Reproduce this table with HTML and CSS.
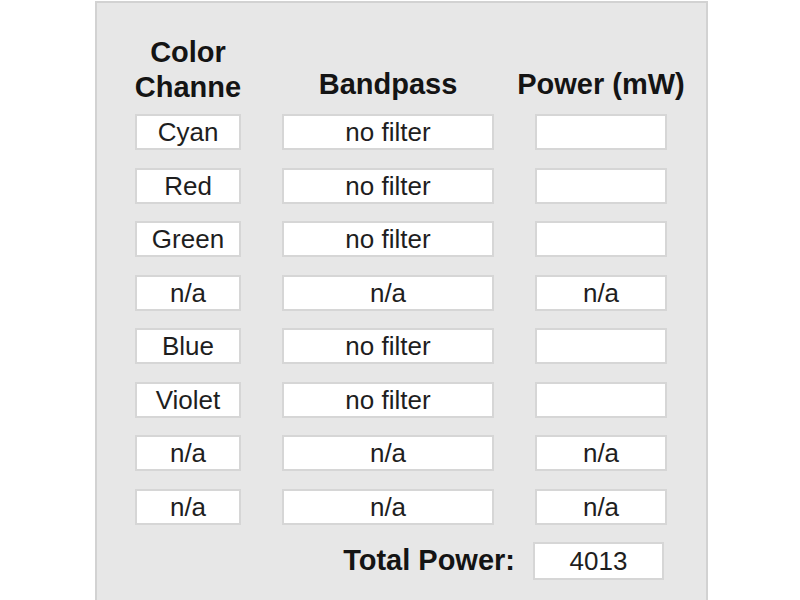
FILE: index.html
```html
<!DOCTYPE html>
<html>
<head>
<meta charset="utf-8">
<link rel="stylesheet" href="styles.css">
</head>
<body>
<div class="panel">
  <div class="head">
    <div class="hcell h1">Color<br>Channe</div>
    <div class="hcell">Bandpass</div>
    <div class="hcell">Power (mW)</div>
  </div>
  <div class="rows">
    <div class="box">Cyan</div><div class="box">no filter</div><div class="box"></div>
    <div class="box">Red</div><div class="box">no filter</div><div class="box"></div>
    <div class="box">Green</div><div class="box">no filter</div><div class="box"></div>
    <div class="box">n/a</div><div class="box">n/a</div><div class="box">n/a</div>
    <div class="box">Blue</div><div class="box">no filter</div><div class="box"></div>
    <div class="box">Violet</div><div class="box">no filter</div><div class="box"></div>
    <div class="box">n/a</div><div class="box">n/a</div><div class="box">n/a</div>
    <div class="box">n/a</div><div class="box">n/a</div><div class="box">n/a</div>
  </div>
  <div class="total">
    <div class="tlabel">Total Power:</div>
    <div class="box tbox">4013</div>
  </div>
</div>
</body>
</html>
```

FILE: styles.css
```css
html, body {
  margin: 0;
  padding: 0;
  background: #ffffff;
  font-family: "Liberation Sans", Arial, sans-serif;
  color: #1a1a1a;
  overflow: hidden;
}

.panel {
  box-sizing: border-box;
  margin-left: 95px;
  margin-top: 1px;
  width: 613px;
  height: 599px;
  background: #e7e7e7;
  border: 2px solid #d2d2d2;
  border-bottom: none;
  padding: 32px 39px 0 38px;
}

.head {
  display: grid;
  grid-template-columns: 106px 212px 132px;
  column-gap: 41px;
  align-items: end;
  margin-bottom: 9px;
}

.hcell {
  display: flex;
  justify-content: center;
  text-align: center;
  white-space: nowrap;
  font-weight: bold;
  font-size: 29px;
  line-height: 35px;
  color: #141414;
  padding-bottom: 3px;
}

.hcell.h1 {
  padding-bottom: 0;
}

.rows {
  display: grid;
  grid-template-columns: 106px 212px 132px;
  column-gap: 41px;
  row-gap: 17.5px;
}

.box {
  box-sizing: border-box;
  height: 36px;
  background: #ffffff;
  border: 2px solid #d6d6d6;
  text-align: center;
  font-size: 26px;
  line-height: 32px;
  color: #1e1e1e;
  white-space: nowrap;
}

.total {
  display: flex;
  justify-content: flex-end;
  align-items: center;
  gap: 18px;
  margin-top: 17px;
  margin-right: 3px;
}

.tlabel {
  font-weight: bold;
  font-size: 29px;
  color: #141414;
}

.tbox {
  width: 131px;
  height: 38px;
  line-height: 34px;
}
```
